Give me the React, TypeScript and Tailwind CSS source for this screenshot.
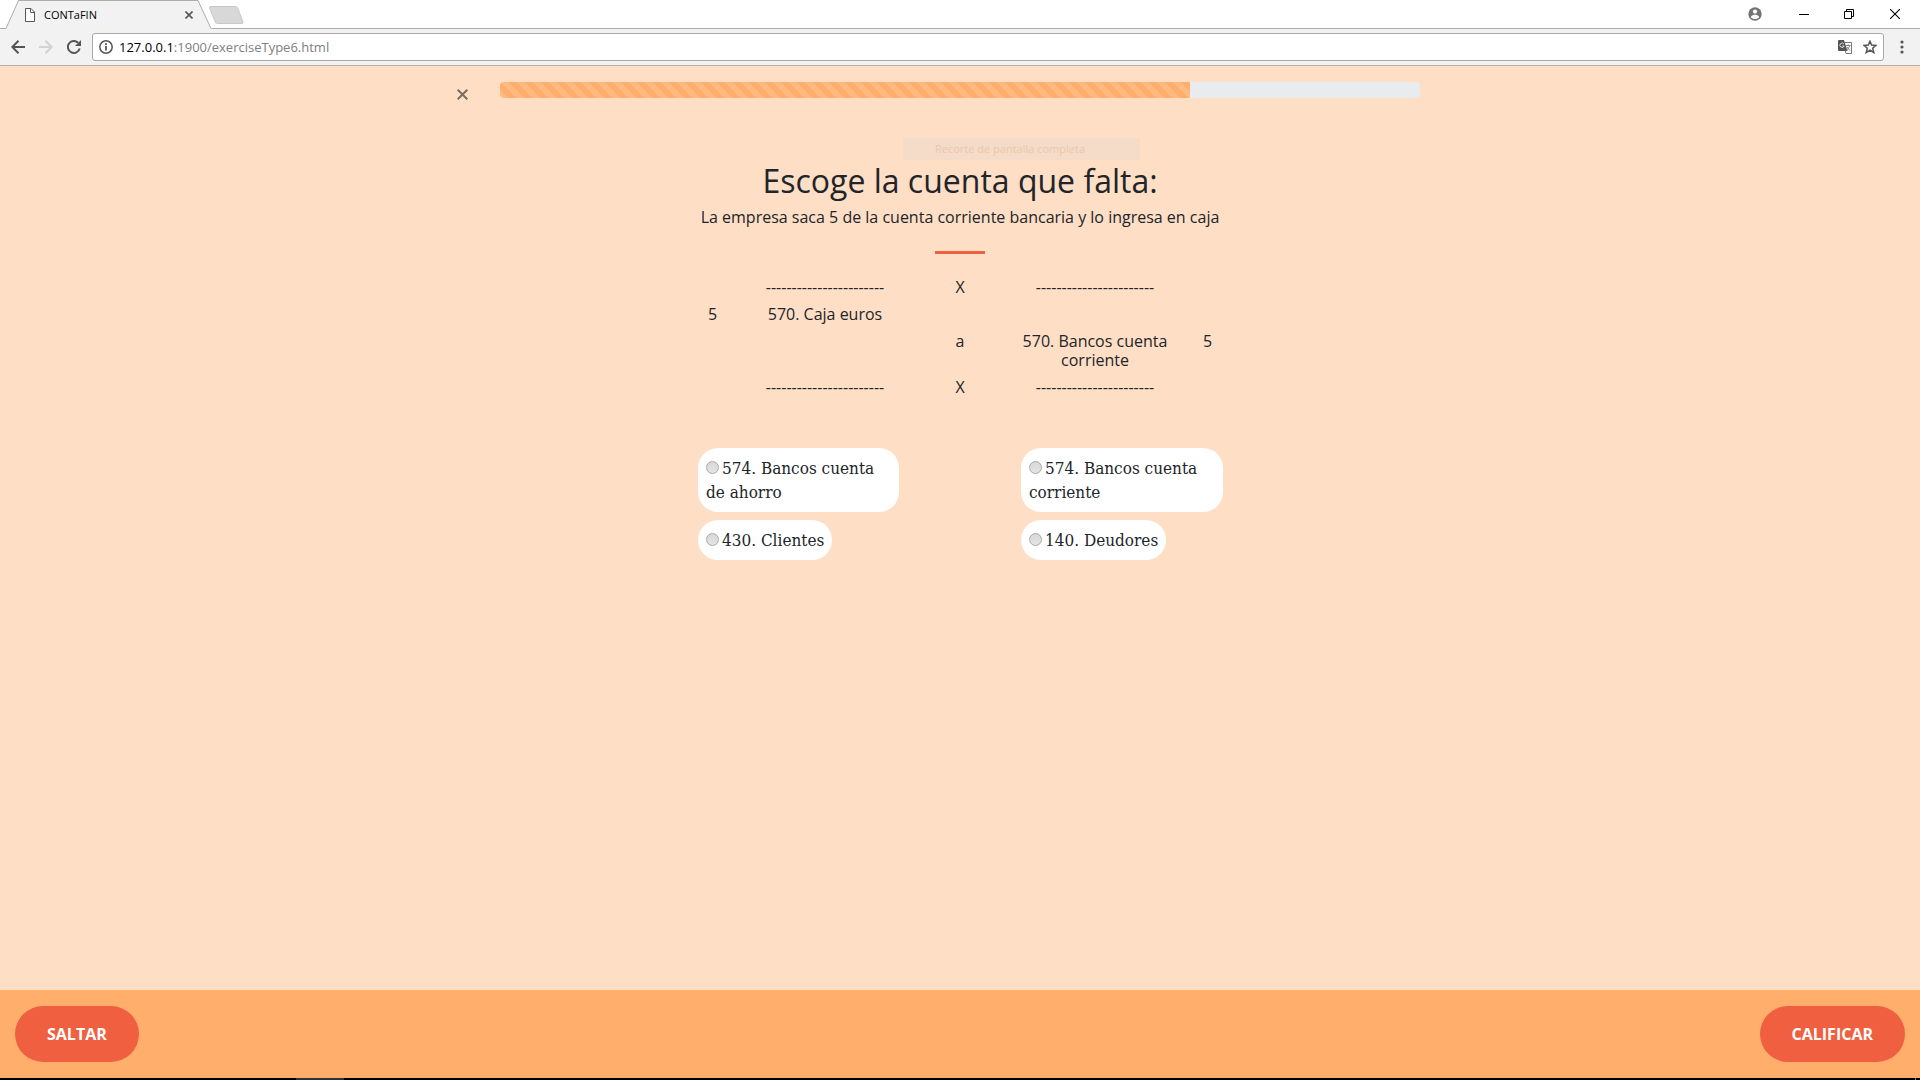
import { useState } from "react";

const DASHES = "-----------------------";

const entries = [
  ["", DASHES, "X", DASHES, ""],
  ["5", "570. Caja euros", "", "", ""],
  ["", "", "a", "570. Bancos cuenta corriente", "5"],
  ["", DASHES, "X", DASHES, ""],
];

const options = [
  "574. Bancos cuenta de\u00a0ahorro",
  "574. Bancos cuenta corriente",
  "430. Clientes",
  "140. Deudores",
];

function TabStrip() {
  return (
    <div className="flex h-7 justify-between bg-white">
      <div className="flex">
        <div className="relative ml-[5px] h-[29px] w-[207px] shrink-0">
          <svg className="absolute inset-0" width="207" height="29" viewBox="0 0 207 29" aria-hidden="true">
            <path d="M0 28.5H1L13.5 .5H193L206 28.5H207V29H0Z" fill="#f2f2f2" />
            <path d="M0 28.5H1L13.5 .5H193L206 28.5" fill="none" stroke="#acacac" />
          </svg>
          <div className="relative flex h-[29px] items-center pl-5 pr-[19px]">
            <svg width="10" height="14" viewBox="0 0 10 14" fill="none" stroke="#555" aria-hidden="true">
              <path d="M.5 .5H6L9.500 4V13.500H.5Z" fill="#fff" />
              <path d="M5.500 .5V4.500H9.500" />
            </svg>
            <span className="ml-[9px] flex-1 text-[11px] leading-4 text-black">CONTaFIN</span>
            <button aria-label="Cerrar pestaña" className="p-0">
              <svg width="8" height="8" viewBox="0 0 8 8" stroke="#5a5a5a" strokeWidth="1.700">
                <path d="M.5 .5L7.500 7.500M7.500 .5L.5 7.500" />
              </svg>
            </button>
          </div>
        </div>
        <button aria-label="Nueva pestaña" className="ml-[-4px] h-6 self-start pt-[6px]">
          <svg width="36" height="18" viewBox="0 0 36 18">
            <path d="M3 .5H27Q29 .5 29.700 2L35 16Q35.500 17.500 34 17.500H10Q8 17.500 7.300 16L1.500 2Q1 .5 3 .5Z" fill="#d8d8d8" stroke="#c8c8c8" />
          </svg>
        </button>
      </div>
      <div className="flex items-center">
        <button aria-label="Usuario" className="mr-[37px]">
          <svg width="14" height="14" viewBox="0 0 14 14">
            <circle cx="7" cy="7" r="6.700" fill="#747474" />
            <circle cx="7" cy="4.600" r="2.100" fill="#fff" />
            <path d="M2.800 10C3.300 8.300 5.500 7.800 7 7.800S10.700 8.300 11.200 10C10.200 11.400 8.700 12 7 12S3.800 11.400 2.800 10Z" fill="#fff" />
          </svg>
        </button>
        <button aria-label="Minimizar" className="mr-[35px]">
          <svg width="10" height="10" viewBox="0 0 10 10" stroke="#000"><path d="M0 5.500H10" /></svg>
        </button>
        <button aria-label="Restaurar" className="mr-9">
          <svg width="10" height="10" viewBox="0 0 10 10" fill="none" stroke="#000">
            <path d="M.5 2.500H7.500V9.500H.5ZM2.500 2.500V.5H9.500V7.500H7.500" />
          </svg>
        </button>
        <button aria-label="Cerrar" className="mr-5">
          <svg width="10" height="10" viewBox="0 0 10 10" stroke="#000" strokeWidth="1.100"><path d="M0 0L10 10M10 0L0 10" /></svg>
        </button>
      </div>
    </div>
  );
}

function Toolbar() {
  return (
    <div className="flex h-[38px] items-center border-y border-t-[#acacac] border-b-[#b0b0b0] bg-[#f2f2f2] pl-[11px]">
      <button aria-label="Atrás">
        <svg width="14" height="14" viewBox="0 0 14 14" fill="none" stroke="#555" strokeWidth="2">
          <path d="M14 7H1.500M7.500 .7L1.300 7L7.500 13.300" />
        </svg>
      </button>
      <button aria-label="Adelante" className="ml-[14px]">
        <svg width="14" height="14" viewBox="0 0 14 14" fill="none" stroke="#d2d2d2" strokeWidth="2">
          <path d="M0 7H12.500M6.500 .7L12.700 7L6.500 13.300" />
        </svg>
      </button>
      <button aria-label="Recargar" className="ml-[14px]">
        <svg width="14" height="14" viewBox="0 0 14 14" fill="none" stroke="#555" strokeWidth="2">
          <path d="M12.700 8.500A6 6 0 1 1 11.200 2.800" />
          <path d="M14 0V6H8Z" fill="#555" stroke="none" />
        </svg>
      </button>
      <div className="ml-[11px] flex h-7 flex-1 items-center rounded-[3px] border border-[#a8a8a8] bg-white pl-[6px] pr-[6px]">
        <svg width="14" height="14" viewBox="0 0 14 14" fill="none" stroke="#555" strokeWidth="1.500" aria-hidden="true">
          <circle cx="7" cy="7" r="6.200" />
          <path d="M7 6V10.500M7 3.300V4.900" strokeWidth="1.800" />
        </svg>
        <a href="#" className="ml-[6px] flex-1 text-[13px] leading-5 text-[#808080]">
          <span className="text-black">127.0.0.1</span>:1900/exerciseType6.html
        </a>
        <button aria-label="Traducir">
          <svg width="14" height="14" viewBox="0 0 14 14">
            <path d="M5.500 2.500H13.500V13.500H8Z" fill="#fff" stroke="#777" />
            <path d="M0 1Q0 0 1 0H6L9.500 11H1Q0 11 0 10Z" fill="#555" />
            <path d="M6 4.100A2.200 2.200 0 1 0 6.200 6H4.200" fill="none" stroke="#ddd" />
            <path d="M8 5.500H12.500M10.200 4.500V5.500M11.800 5.500Q11 8.500 8.500 10M9 7L12 10.500" fill="none" stroke="#777" strokeWidth=".9" />
          </svg>
        </button>
        <button aria-label="Añadir a marcadores" className="ml-[11px]">
          <svg width="14" height="14" viewBox="0 0 14 14" fill="none" stroke="#555" strokeWidth="1.500">
            <path d="M7 1.200L8.600 5.100L13 5.400L9.700 8.200L10.800 12.600L7 10.200L3.200 12.600L4.300 8.200L1 5.400L5.400 5.100Z" />
          </svg>
        </button>
      </div>
      <button aria-label="Menú" className="ml-4 mr-4">
        <svg width="4" height="14" viewBox="0 0 4 14" fill="#555">
          <circle cx="2" cy="2" r="1.600" /><circle cx="2" cy="7" r="1.600" /><circle cx="2" cy="12" r="1.600" />
        </svg>
      </button>
    </div>
  );
}

export default function App() {
  const [choice, setChoice] = useState("");
  const progress = 75;

  return (
    <div className="flex min-h-screen flex-col bg-[#ffdec6] font-['Open_Sans',sans-serif] text-[#212529]">
      <header>
        <TabStrip />
        <Toolbar />
      </header>

      <main className="relative flex-1">
        <div className="mx-auto flex w-full max-w-[1008px] items-start pr-[44px] pt-4">
          <button aria-label="Salir" className="ml-px mt-[7px] shrink-0">
            <svg width="11" height="11" viewBox="0 0 11 11" stroke="#7c6c62" strokeWidth="2">
              <path d="M.7 .7L10.300 10.300M10.300 .7L.7 10.300" />
            </svg>
          </button>
          <div
            role="progressbar"
            aria-label="Progreso"
            aria-valuenow={progress}
            className="ml-8 h-4 flex-1 overflow-hidden rounded bg-[#e9ecef]"
          >
            <div
              className="h-full bg-[#ffae6c] bg-[linear-gradient(45deg,rgba(255,255,255,.15)_25%,transparent_25%,transparent_50%,rgba(255,255,255,.15)_50%,rgba(255,255,255,.15)_75%,transparent_75%,transparent)] bg-[length:16px_16px]"
              style={{ width: `${progress}%` }}
            />
          </div>
        </div>

        <div className="absolute left-1/2 top-[72px] -ml-[57px] h-[22px] w-[237px] bg-[#f5dcc9] pl-8 text-[11px] leading-[22px] text-[#eac7aa]">
          Recorte de pantalla completa
        </div>

        <section className="relative mx-auto mt-[62px] w-full max-w-[540px]">
          <h1 className="text-center text-[32px] leading-[38px]">Escoge la cuenta que falta:</h1>
          <p className="mt-2 text-center text-base leading-[19px]">
            La empresa saca 5 de la cuenta corriente bancaria y lo ingresa en caja
          </p>
          <hr className="mx-auto mt-6 w-[50px] border-0 border-t-[3px] border-[#f05f40]" />

          <table className="mt-5 w-full table-fixed text-center text-base leading-[19px]">
            <colgroup>
              <col className="w-1/12" />
              <col className="w-4/12" />
              <col className="w-2/12" />
              <col className="w-4/12" />
              <col className="w-1/12" />
            </colgroup>
            <tbody>
              {entries.map((row, i) => (
                <tr key={i}>
                  {row.map((cell, j) => (
                    <td key={j} className={j === 1 || j === 3 ? "px-[15px] py-1 align-top" : "py-1 align-top"}>
                      {cell}
                    </td>
                  ))}
                </tr>
              ))}
            </tbody>
          </table>

          <fieldset
            aria-label="Cuenta que falta"
            className="ml-2 mr-[7px] mt-[47px] grid grid-cols-[201px_202px] justify-between gap-y-2 font-['DejaVu_Serif_Condensed','DejaVu_Serif',serif]"
          >
            {options.map((option) => (
              <label key={option} className="justify-self-start rounded-[20px] bg-white p-2 text-[17px] leading-6">
                <input
                  type="radio"
                  name="cuenta"
                  checked={choice === option}
                  onChange={() => setChoice(option)}
                  className="mr-[3px] h-[13px] w-[13px] appearance-none rounded-full border border-[#a9a9a9] bg-linear-to-b from-[#d8d8d8] to-[#e4e4e4] checked:border-4 checked:border-[#555]"
                />
                {option}
              </label>
            ))}
          </fieldset>
        </section>
      </main>

      <footer>
        <div className="flex justify-between bg-[#ffae6c] px-[15px] py-4">
          <button className="h-14 rounded-full bg-[#f05f40] px-8 text-base font-bold text-white">SALTAR</button>
          <button className="h-14 rounded-full bg-[#f05f40] px-8 text-base font-bold text-white">CALIFICAR</button>
        </div>
        <div className="flex h-[2px] justify-between bg-black">
          <div className="ml-[296px] w-12 bg-[#333]" />
          <div className="mr-1 w-px bg-[#777]" />
        </div>
      </footer>
    </div>
  );
}
